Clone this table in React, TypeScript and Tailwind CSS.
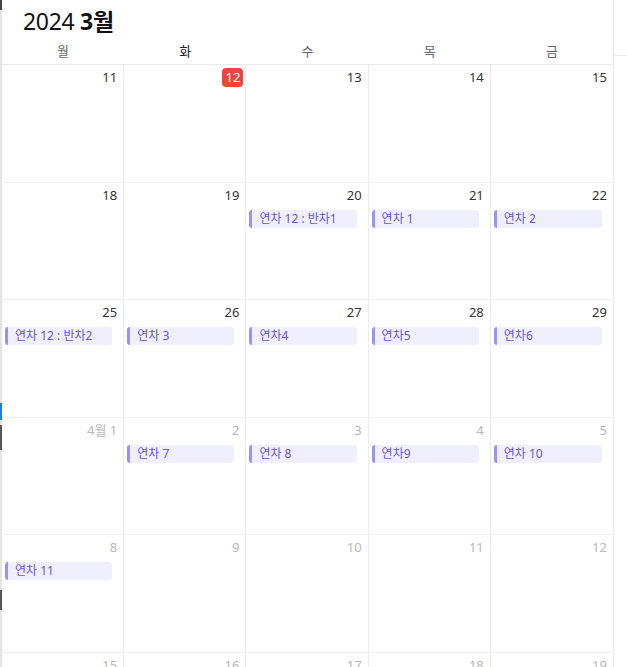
import React from "react";

type Ev = string;
type Cell = { label: string; muted?: boolean; today?: boolean; events?: Ev[] };

const rows: Cell[][] = [
  [{ label: "11" }, { label: "12", today: true }, { label: "13" }, { label: "14" }, { label: "15" }],
  [
    { label: "18" },
    { label: "19" },
    { label: "20", events: ["연차 12 : 반차1"] },
    { label: "21", events: ["연차 1"] },
    { label: "22", events: ["연차 2"] },
  ],
  [
    { label: "25", events: ["연차 12 : 반차2"] },
    { label: "26", events: ["연차 3"] },
    { label: "27", events: ["연차4"] },
    { label: "28", events: ["연차5"] },
    { label: "29", events: ["연차6"] },
  ],
  [
    { label: "4월 1", muted: true },
    { label: "2", muted: true, events: ["연차 7"] },
    { label: "3", muted: true, events: ["연차 8"] },
    { label: "4", muted: true, events: ["연차9"] },
    { label: "5", muted: true, events: ["연차 10"] },
  ],
  [
    { label: "8", muted: true, events: ["연차 11"] },
    { label: "9", muted: true },
    { label: "10", muted: true },
    { label: "11", muted: true },
    { label: "12", muted: true },
  ],
  [
    { label: "15", muted: true },
    { label: "16", muted: true },
    { label: "17", muted: true },
    { label: "18", muted: true },
    { label: "19", muted: true },
  ],
];

const days = ["월", "화", "수", "목", "금"];

export default function App() {
  return (
    <div
      className="w-[627px] h-[667px] overflow-hidden bg-white flex"
      style={{ fontFamily: '"Noto Sans", "Noto Sans CJK KR", sans-serif' }}
    >
      {/* background page sliver */}
      <div className="w-[2px] shrink-0 bg-[#e4e4e4] flex flex-col">
        <div className="h-[10px] shrink-0 bg-[#444]" />
        <div className="h-[393px] shrink-0" />
        <div className="h-[17px] shrink-0 bg-[#1f7fd6]" />
        <div className="h-[5px] shrink-0" />
        <div className="h-[25px] shrink-0 bg-[#555]" />
        <div className="h-[140px] shrink-0" />
        <div className="h-[20px] shrink-0 bg-[#555]" />
      </div>

      <div className="w-[612px] shrink-0 border-r border-[#ececec] flex flex-col">
        <div className="h-[40px] shrink-0 pl-[21px] pt-[6px] text-[23px] leading-[30px] text-[#111] tracking-[-0.3px]">
          2024 <span className="font-bold">3월</span>
        </div>
        <div className="grid grid-cols-5 h-[25px] shrink-0 border-b border-[#e8e8e8]">
          {days.map((d, i) => (
            <div
              key={d}
              className={`text-center text-[13px] leading-[22px] ${i === 1 ? "text-[#222]" : "text-[#666]"}`}
            >
              {d}
            </div>
          ))}
        </div>
        <div className="flex flex-col shrink-0">
          {rows.map((row, ri) => (
            <div key={ri} className="grid grid-cols-5 h-[117.6px] shrink-0 border-b border-[#f0f0f0]">
              {row.map((c, ci) => (
                <div
                  key={ci}
                  className={`flex flex-col ${ci < 4 ? "border-r border-[#ececec]" : ""}`}
                >
                  <div className="flex justify-end pr-[6px] pt-[3px] h-[24px]">
                    {c.today ? (
                      <span className="bg-[#ef4444] text-white rounded-[4px] h-[19px] min-w-[21px] px-[3px] mr-[-4px] text-[13px] leading-[19px] text-center">
                        {c.label}
                      </span>
                    ) : (
                      <span
                        className={`text-[13px] leading-[19px] ${c.muted ? "text-[#b8b8b8]" : "text-[#333]"}`}
                      >
                        {c.label}
                      </span>
                    )}
                  </div>
                  <div className="flex flex-col pl-[3px] pr-[11px] pt-[3px]">
                    {(c.events || []).map((e, ei) => (
                      <div
                        key={ei}
                        className="h-[18px] rounded-[3px] bg-[#f0effd] border-l-[3px] border-[#9c92f6] pl-[7px] text-[12px] leading-[18px] text-[#6a52dc] whitespace-nowrap overflow-hidden"
                      >
                        {e}
                      </div>
                    ))}
                  </div>
                </div>
              ))}
            </div>
          ))}
        </div>
      </div>

      <div className="flex-1 flex flex-col">
        <div className="h-[56px] shrink-0 border-b border-[#ececec]" />
      </div>
    </div>
  );
}
